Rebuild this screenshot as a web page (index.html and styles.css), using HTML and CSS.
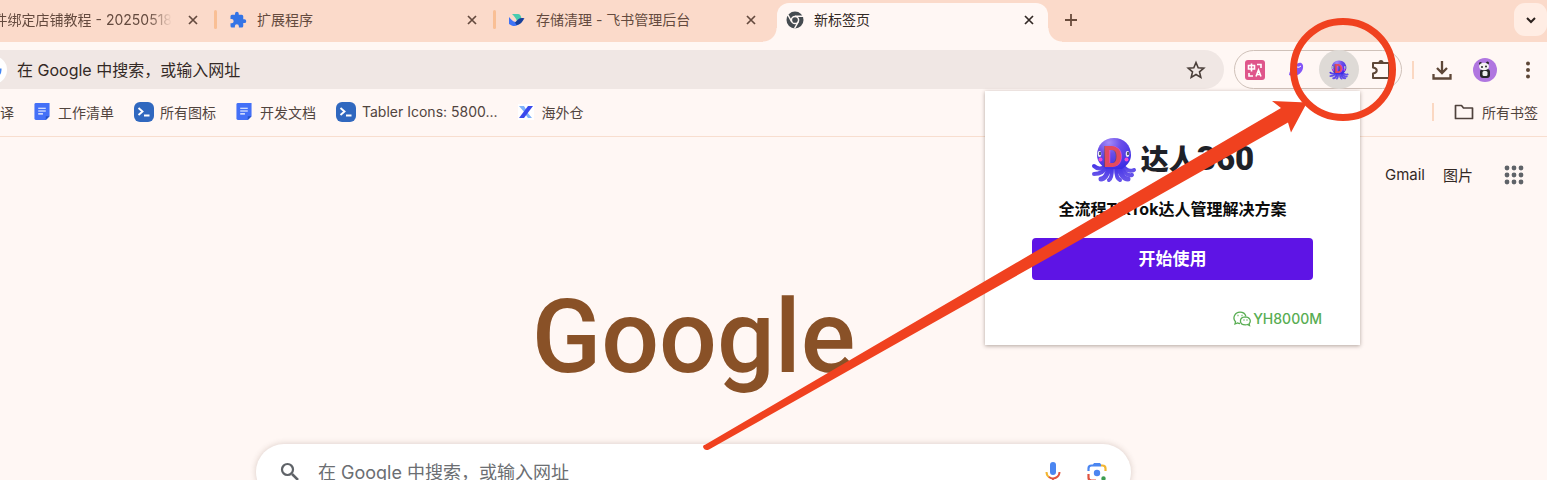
FILE: index.html
```html
<!DOCTYPE html>
<html lang="zh-CN">
<head>
  <meta charset="UTF-8" />
  <meta name="viewport" content="width=device-width, initial-scale=1.0"/>
  <title>新标签页</title>
  <link rel="stylesheet" href="styles.css">
</head>
<body>
  <!-- shared icons -->
  <svg class="defs" aria-hidden="true">
    <defs>
      <radialGradient id="skin" cx="0.35" cy="0.15" r="0.9">
        <stop offset="0" stop-color="#a58bf8"/>
        <stop offset="0.4" stop-color="#6a4ee9"/>
        <stop offset="1" stop-color="#3a2ce4"/>
      </radialGradient>
      <linearGradient id="legs" x1="0" y1="0" x2="0" y2="1">
        <stop offset="0" stop-color="#4433e6"/>
        <stop offset="1" stop-color="#6653ea"/>
      </linearGradient>
    </defs>
    <symbol id="close" viewBox="0 0 16 16">
      <path d="M4 4l8 8M12 4l-8 8" fill="none" stroke="currentColor" stroke-width="1.7"/>
    </symbol>
    <symbol id="octopus" viewBox="0 0 46 46">
      <g fill="none" stroke="url(#legs)" stroke-linecap="round">
        <path d="M15 28C11 34 5 31 3 29M31 28C36 35 41 34 43 33" stroke-width="4"/>
        <path d="M16 29C13 36 7 37 3 37M29 29C33 37 38 39 41 38" stroke-width="4"/>
        <path d="M18 30C17 38 13 42 10 42M28 30C29 38 33 42 37 42" stroke-width="5"/>
        <path d="M21 31C21 38 20 42 18 43M25 31C25 38 26 42 29 43" stroke-width="4"/>
      </g>
      <path d="M23 1C13 1 6 8 6 18C6 25 11 29 15 32H31C35 29 40 25 40 18C40 8 33 1 23 1Z" fill="url(#skin)"/>
      <ellipse cx="8.500" cy="17" rx="1.800" ry="3" fill="#e9e9f4"/>
      <ellipse cx="36.500" cy="17" rx="1.800" ry="3" fill="#e9e9f4"/>
      <path d="M9 15v3M37 15v3" stroke="#26324a" stroke-width="1.500"/>
      <circle cx="9.500" cy="22.500" r="2" fill="#ed4bd5"/>
      <circle cx="35.500" cy="22.500" r="2" fill="#ed4bd5"/>
      <text x="12" y="30" class="octopus-d">D</text>
    </symbol>
    <symbol id="doc" viewBox="0 0 16 18">
      <path d="M0 1.500Q0 0 1.500 0H16V14L12 18H1.500Q0 18 0 16.500Z" fill="#4470f7"/>
      <path d="M16 14h-4v4z" fill="#2452c8"/>
      <path d="M4 5.500h8M4 8.500h8M4 11.500h5" stroke="#fff" stroke-width="1.200"/>
    </symbol>
    <symbol id="terminal" viewBox="0 0 20 20">
      <rect width="20" height="20" rx="6" fill="#3068bf"/>
      <path d="M4.500 6L8.500 9.500L4.500 13M10 13.500h5.500" fill="none" stroke="#fff" stroke-width="1.900"/>
    </symbol>
  </svg>

  <nav class="tabs">
    <div class="tab tab-cut">
      <span class="tab-title fade">件绑定店铺教程 - 20250518</span>
      <button class="icon-btn" aria-label="关闭"><svg class="i16"><use href="#close"/></svg></button>
    </div>
    <div class="tab">
      <svg class="i18" viewBox="0 0 24 24" fill="#3474e6"><path d="M20.500 11H19V7a2 2 0 0 0-2-2h-4V3.500a2.500 2.500 0 0 0-5 0V5H4a2 2 0 0 0-2 2v3.800h1.500a2.700 2.700 0 0 1 0 5.400H2V20a2 2 0 0 0 2 2h3.800v-1.500a2.700 2.700 0 0 1 5.400 0V22H17a2 2 0 0 0 2-2v-4h1.500a2.500 2.500 0 0 0 0-5z"/></svg>
      <span class="tab-title">扩展程序</span>
      <button class="icon-btn" aria-label="关闭"><svg class="i16"><use href="#close"/></svg></button>
    </div>
    <div class="tab">
      <svg class="i18" viewBox="0 0 18 18"><path d="M4 3h6c2 0 3 2 3.500 4.500L9 10C8 7 6 5 4 3z" fill="#48ccb0"/><path d="M1 6c4 5 7 6 11 5c-2 5-7 5-11 2z" fill="#3e72f6"/><path d="M7 11.500c3-3 5-5.500 9.500-4C14.500 9.500 14 13.500 8.500 14z" fill="#173f9b"/></svg>
      <span class="tab-title">存储清理 - 飞书管理后台</span>
      <button class="icon-btn" aria-label="关闭"><svg class="i16"><use href="#close"/></svg></button>
    </div>
    <div class="tab active">
      <svg class="i18" viewBox="0 0 18 18"><circle cx="9" cy="9" r="8.500" fill="#454b50"/><circle cx="9" cy="9" r="3.600" fill="none" stroke="#fff8f5" stroke-width="1.500"/><path d="M9 5.300h8M5.800 10.900L2 4M12.200 10.900L8.500 17.500" stroke="#fff8f5" stroke-width="1.500"/></svg>
      <span class="tab-title">新标签页</span>
      <button class="icon-btn" aria-label="关闭"><svg class="i16"><use href="#close"/></svg></button>
    </div>
    <button class="icon-btn new-tab" aria-label="新建标签页"><svg class="i16" viewBox="0 0 16 16"><path d="M8 2v12M2 8h12" stroke="#694b3c" stroke-width="1.800"/></svg></button>
    <button class="tab-search" aria-label="搜索标签页"><svg class="i16" viewBox="0 0 16 16"><path d="M4 6l4 4 4-4" fill="none" stroke="#2b211d" stroke-width="2"/></svg></button>
  </nav>

  <div class="toolbar">
    <div class="omnibox">
      <svg class="site" viewBox="0 0 28 28"><circle cx="14" cy="14" r="14" fill="#fff"/><path d="M14 14h7a7 7 0 1 1-2-5" fill="none" stroke="#4285f4" stroke-width="3"/></svg>
      <input type="text" aria-label="地址栏" value="在 Google 中搜索，或输入网址">
      <button class="icon-btn" aria-label="收藏"><svg class="i20" viewBox="0 0 20 20"><path d="M10 2.500l2.200 5.200 5.600.5-4.300 3.700 1.300 5.500-4.800-2.900-4.800 2.900 1.300-5.500L2.200 8.200l5.600-.5z" fill="none" stroke="#493e39" stroke-width="1.600"/></svg></button>
    </div>
    <div class="extensions">
      <button class="ext" aria-label="翻译">
        <svg class="i20" viewBox="0 0 20 20"><rect width="20" height="20" rx="3" fill="#df568b"/><path d="M3.500 5.500h6v3.500h-6zM6.500 3.500v8M12 4.500h4v3.500M4 13v3h4M11 16.500l2.500-6.500 2.500 6.500M12 14.500h3.500" fill="none" stroke="#fff" stroke-width="1.600"/></svg>
      </button>
      <button class="ext" aria-label="扩展">
        <svg class="i20" viewBox="0 0 20 20"><path d="M2 15C3 8 7 8 9 5c3-4 8-2 7 3-1 6-8 10-14 7z" fill="#8355f7"/><path d="M10 7q2 1 4-1" fill="none" stroke="#fff" stroke-width="1"/></svg>
      </button>
      <button class="ext current" aria-label="达人360"><svg class="i20"><use href="#octopus"/></svg></button>
      <button class="ext" aria-label="扩展程序">
        <svg class="i22" viewBox="0 0 22 22"><path d="M3 4h16v15H3v-4.500c5-1 5-5 0-6z" fill="none" stroke="#5e4737" stroke-width="2" stroke-linejoin="round"/><path d="M8.500 3.500a2.500 2.500 0 0 1 5 0zM19.500 9a2.500 2.500 0 0 1 0 5z" fill="#5e4737"/></svg>
      </button>
    </div>
    <span class="divider"></span>
    <button class="icon-btn" aria-label="下载"><svg class="i20" viewBox="0 0 20 20"><path d="M10 1v11M5 8l5 5 5-5M1.500 14v4.500h17V14" fill="none" stroke="#5e4737" stroke-width="2.300"/></svg></button>
    <button class="icon-btn" aria-label="个人资料">
      <svg class="i24" viewBox="0 0 24 24"><circle cx="12" cy="12" r="12" fill="#b076e0"/><rect x="7" y="11" width="10" height="9" rx="3" fill="#262427"/><rect x="9.500" y="13" width="5" height="5" rx="1.500" fill="#eee"/><circle cx="7.500" cy="5.500" r="1.500" fill="#262427"/><circle cx="14.500" cy="5" r="1.500" fill="#262427"/><ellipse cx="11" cy="8.500" rx="5" ry="3.800" fill="#f3f1f1"/><circle cx="9" cy="9" r="1" fill="#262427"/><circle cx="13" cy="8.500" r="1" fill="#262427"/></svg>
    </button>
    <button class="icon-btn" aria-label="菜单"><svg class="i20" viewBox="0 0 20 20" fill="#5e4737"><circle cx="10" cy="3.500" r="2"/><circle cx="10" cy="10" r="2"/><circle cx="10" cy="16.500" r="2"/></svg></button>
  </div>

  <nav class="bookmarks">
    <a href="#">译</a>
    <a href="#"><svg class="doc"><use href="#doc"/></svg>工作清单</a>
    <a href="#" class="near"><svg class="i20"><use href="#terminal"/></svg>所有图标</a>
    <a href="#"><svg class="doc"><use href="#doc"/></svg>开发文档</a>
    <a href="#" class="near"><svg class="i20"><use href="#terminal"/></svg>Tabler Icons: 5800...</a>
    <a href="#"><svg class="i16" viewBox="0 0 16 16"><rect width="16" height="16" fill="#fff"/><path d="M1 2h5l3 5-2 2zM9 8l5 6h-4L7 10z" fill="#7fb2fb"/><path d="M10 2h5L6 14H1z" fill="#3949ed"/></svg>海外仓</a>
    <span class="divider"></span>
    <a href="#" class="all"><svg class="i20" viewBox="0 0 20 20"><path d="M1.500 3.500h6l2 2.500h9v10.500h-17z" fill="none" stroke="#4f423c" stroke-width="1.700" stroke-linejoin="round"/></svg>所有书签</a>
  </nav>

  <main>
    <div class="links">
      <a href="#">Gmail</a>
      <a href="#">图片</a>
      <button class="icon-btn" aria-label="Google 应用">
        <svg class="i20" viewBox="0 0 20 20" fill="#5f6368"><circle cx="3" cy="3" r="2.400"/><circle cx="10" cy="3" r="2.400"/><circle cx="17" cy="3" r="2.400"/><circle cx="3" cy="10" r="2.400"/><circle cx="10" cy="10" r="2.400"/><circle cx="17" cy="10" r="2.400"/><circle cx="3" cy="17" r="2.400"/><circle cx="10" cy="17" r="2.400"/><circle cx="17" cy="17" r="2.400"/></svg>
      </button>
    </div>
    <div class="center">
      <h1>Google</h1>
      <form class="search">
        <svg class="i20" viewBox="0 0 20 20"><path d="M12 12L18 18" stroke="#5f6368" stroke-width="2.500"/><circle cx="7.500" cy="7.500" r="5.500" fill="none" stroke="#5f6368" stroke-width="2.200"/></svg>
        <input type="text" aria-label="搜索" placeholder="在 Google 中搜索，或输入网址">
        <button type="button" class="icon-btn" aria-label="语音搜索"><svg class="i20" viewBox="0 0 20 20"><rect x="7" y="0" width="6" height="13" rx="3" fill="#4b86f1"/><path d="M3.500 10a6.500 6.500 0 0 0 3 5.500" fill="none" stroke="#f2b632" stroke-width="2"/><path d="M6 15a6.500 6.500 0 0 0 10.500-5M10 16v4" fill="none" stroke="#df5340" stroke-width="2"/></svg></button>
        <button type="button" class="icon-btn" aria-label="以图搜索"><svg class="i20" viewBox="0 0 20 20"><path d="M1.500 9V6.500q0-3 3-3H6L8 1.500h4l2 2z" fill="none" stroke="none"/><path d="M1.500 9V6.500q0-3 3-3H14" fill="none" stroke="#4b86f1" stroke-width="2.200"/><path d="M5 4l2-3h6l2 3z" fill="#4b86f1"/><path d="M14 3.500h1.500q3 0 3 3V9" fill="none" stroke="#f2b632" stroke-width="2.200"/><path d="M1.500 12v3.500q0 3 3 3H9" fill="none" stroke="#df5340" stroke-width="2.200"/><circle cx="10" cy="11" r="3.200" fill="#4b86f1"/><circle cx="16.500" cy="16.500" r="2.200" fill="#3d9c51"/></svg></button>
      </form>
    </div>
  </main>

  <section class="popup">
    <div class="brand">
      <svg class="brand-logo"><use href="#octopus"/></svg>
      <h2>达人<span>360</span></h2>
    </div>
    <p>全流程TikTok达人管理解决方案</p>
    <button class="start">开始使用</button>
    <div class="contact">
      <svg class="wechat" viewBox="0 0 18 16" fill="none" stroke="#58ad52" stroke-width="1.300"><path d="M7 12.500q-1.500 0-2.500-.6L2 13l.5-2.200C-1 7 2 1.200 7 1.200c3 0 5.200 1.800 5.800 4"/><path d="M12.300 5.800c-6.500.3-6.500 8 .2 8q1 0 2-.3l2 1-.4-1.800c2.500-2.500.6-6.900-3.800-6.900z"/><path d="M4.500 4.500h1M8.500 4.500h1M10.500 9h1M13.500 9h1"/></svg>
      <span>YH8000M</span>
    </div>
  </section>

  <!-- pointer to the extension button -->
  <svg class="callout" viewBox="0 0 860 480" aria-hidden="true">
    <ellipse cx="656" cy="69.500" rx="49.500" ry="48" fill="none" stroke="#f0411f" stroke-width="7"/>
    <path d="M18.500 444.500L594 108L585 101L620 102.500L604 132.500L601 122.500L22 449.500Q18 451 16.500 448T18.500 444.500Z" fill="#f0411f"/>
  </svg>
</body>
</html>
```

FILE: styles.css
```css
:root {
  --frame: #fbdaca;
  --page: #fff7f4;
  --field: #f0e7e4;
  --text: #332925;
  --muted: #51443e;
  --line: #f8decf;
  --accent: #5e14e5;
}
* {
  margin: 0;
  padding: 0;
  box-sizing: border-box;
}
body {
  position: relative;
  display: flex;
  flex-direction: column;
  height: 100vh;
  overflow: hidden;
  font-family: Inter, "Noto Sans CJK SC", sans-serif;
  font-size: 14px;
  background: var(--page);
  color: var(--text);
}
a {
  color: inherit;
  text-decoration: none;
}
button, input {
  font: inherit;
  color: inherit;
  border: none;
  background: none;
}
button {
  cursor: pointer;
}
input {
  flex: 1;
  min-width: 0;
  outline: none;
}
svg {
  display: block;
  flex-shrink: 0;
}
.defs {
  position: absolute;
  width: 0;
  height: 0;
}
.octopus-d {
  font-family: Roboto, sans-serif;
  font-size: 30px;
  font-weight: 900;
  fill: #e34a5f;
}
.i16 { width: 16px; height: 16px; }
.i18 { width: 18px; height: 18px; }
.i20 { width: 20px; height: 20px; }
.i22 { width: 22px; height: 22px; }
.i24 { width: 24px; height: 24px; }
.icon-btn {
  display: flex;
  align-items: center;
  justify-content: center;
  flex-shrink: 0;
}

/* tab strip */
.tabs {
  display: flex;
  align-items: center;
  flex-shrink: 0;
  height: 42px;
  padding-bottom: 3px;
  background: var(--frame);
}
.tab {
  position: relative;
  display: flex;
  align-items: center;
  gap: 10px;
  width: 279px;
  height: 39px;
  padding: 0 14px;
  color: #644a3e;
}
.tab-cut {
  width: 215px;
  padding-left: 0;
}
.tab-title {
  flex: 1;
  padding-bottom: 1px;
  overflow: hidden;
  white-space: nowrap;
}
.tab-cut .tab-title {
  display: flex;
  justify-content: flex-end;
  margin-right: 3px;
}
.fade {
  mask-image: linear-gradient(to left, transparent, #000 24px);
}
.tab:nth-child(-n+2)::after {
  content: "";
  position: absolute;
  right: -2px;
  width: 3px;
  height: 19px;
  border-radius: 2px;
  background: #f9bf95;
}
.active {
  align-self: flex-end;
  width: 271px;
  margin: 0 6px -3px 4px;
  padding: 0 11px 6px 9px;
  border-radius: 12px 12px 0 0;
  background: var(--page);
  color: var(--text);
}
.active::before, .active::after {
  content: "";
  position: absolute;
  bottom: 0;
  left: -14px;
  width: 14px;
  height: 14px;
  background: radial-gradient(circle at 0 0, transparent 13px, var(--page) 14px);
}
.active::after {
  left: 100%;
  background: radial-gradient(circle at 100% 0, transparent 13px, var(--page) 14px);
}
.new-tab {
  margin-left: 9px;
}
.tab-search {
  display: flex;
  align-items: center;
  justify-content: center;
  width: 33px;
  height: 33px;
  margin-left: auto;
  border-radius: 11px;
  background: #ffede4;
}

/* toolbar */
.toolbar {
  display: flex;
  align-items: center;
  flex-shrink: 0;
  gap: 21px;
  height: 47px;
  padding: 8px 9px 0 0;
}
.omnibox {
  display: flex;
  align-items: center;
  flex: 1;
  gap: 10px;
  height: 39px;
  margin-right: -11px;
  padding-right: 18px;
  border-radius: 0 20px 20px 0;
  background: var(--field);
  font-size: 16px;
}
.omnibox input {
  padding-bottom: 2px;
}
.site {
  width: 28px;
  height: 28px;
  margin-left: -21px;
}
.extensions {
  display: flex;
  align-items: center;
  gap: 2px;
  height: 39px;
  margin-right: -11px;
  border: 1px solid #cfc1b9;
  border-radius: 20px;
}
.ext {
  display: flex;
  align-items: center;
  justify-content: center;
  width: 40px;
  height: 39px;
  border-radius: 20px;
}
.current {
  background: #dedad6;
}
.divider {
  width: 2px;
  height: 18px;
  background: #fbd8c2;
}
.toolbar .divider {
  margin-right: -3px;
}

/* bookmarks */
.bookmarks {
  display: flex;
  align-items: center;
  flex-shrink: 0;
  gap: 20px;
  height: 48px;
  padding: 0 9px 2px 0;
  border-bottom: 1px solid var(--line);
  color: var(--muted);
}
.bookmarks a {
  display: flex;
  align-items: center;
  gap: 8px;
  white-space: nowrap;
}
.bookmarks .near {
  gap: 6px;
}
.bookmarks .divider {
  margin-left: auto;
}
.doc {
  width: 16px;
  height: 17px;
}

/* new tab page */
.links {
  display: flex;
  align-items: center;
  justify-content: flex-end;
  gap: 18px;
  height: 76px;
  padding-right: 23px;
  font-size: 15px;
}
.links a {
  padding-bottom: 2px;
}
.links .icon-btn {
  margin-left: 13px;
}
.center {
  padding: 64px 416px 0 256px;
}
h1 {
  font-family: Roboto, sans-serif;
  font-size: 102px;
  font-weight: 500;
  line-height: 120px;
  text-align: center;
  color: #895127;
}
.search {
  display: flex;
  align-items: center;
  gap: 24px;
  height: 56px;
  margin-top: 47px;
  padding: 0 24px;
  border-radius: 28px;
  background: #fff;
  box-shadow: 0 0 6px rgba(80, 50, 30, 0.22);
  font-size: 18px;
}
.search input {
  margin-left: -6px;
}
.search input::placeholder {
  color: #6b6e72;
  opacity: 1;
}

/* extension popup */
.popup {
  position: absolute;
  top: 91px;
  right: 187px;
  width: 375px;
  padding: 44px 47px 16px;
  background: #fff;
  box-shadow: 0 1px 4px rgba(60, 40, 30, 0.4);
  text-align: center;
}
.brand {
  display: flex;
  align-items: center;
  justify-content: center;
  gap: 4px;
}
.brand-logo {
  width: 46px;
  height: 48px;
}
h2 {
  font-size: 28px;
  font-weight: 900;
  line-height: 48px;
  color: #1e2128;
}
h2 span {
  font-family: Roboto, sans-serif;
  font-size: 33px;
}
.popup p {
  margin-top: 13px;
  font-size: 16px;
  font-weight: 700;
  line-height: 24px;
  white-space: nowrap;
  color: #0b0b0b;
}
.start {
  width: 100%;
  height: 42px;
  margin-top: 17px;
  padding-bottom: 4px;
  border-radius: 4px;
  background: var(--accent);
  font-size: 17px;
  font-weight: 700;
  color: #fff;
}
.contact {
  display: flex;
  align-items: center;
  justify-content: flex-end;
  gap: 2px;
  margin: 29px -9px 0 0;
  font-size: 14px;
  font-weight: 500;
  line-height: 20px;
  color: #58ad52;
}
.wechat {
  width: 18px;
  height: 16px;
}
.callout {
  position: absolute;
  top: 0;
  right: 0;
  width: 860px;
  height: 480px;
  pointer-events: none;
}
```
